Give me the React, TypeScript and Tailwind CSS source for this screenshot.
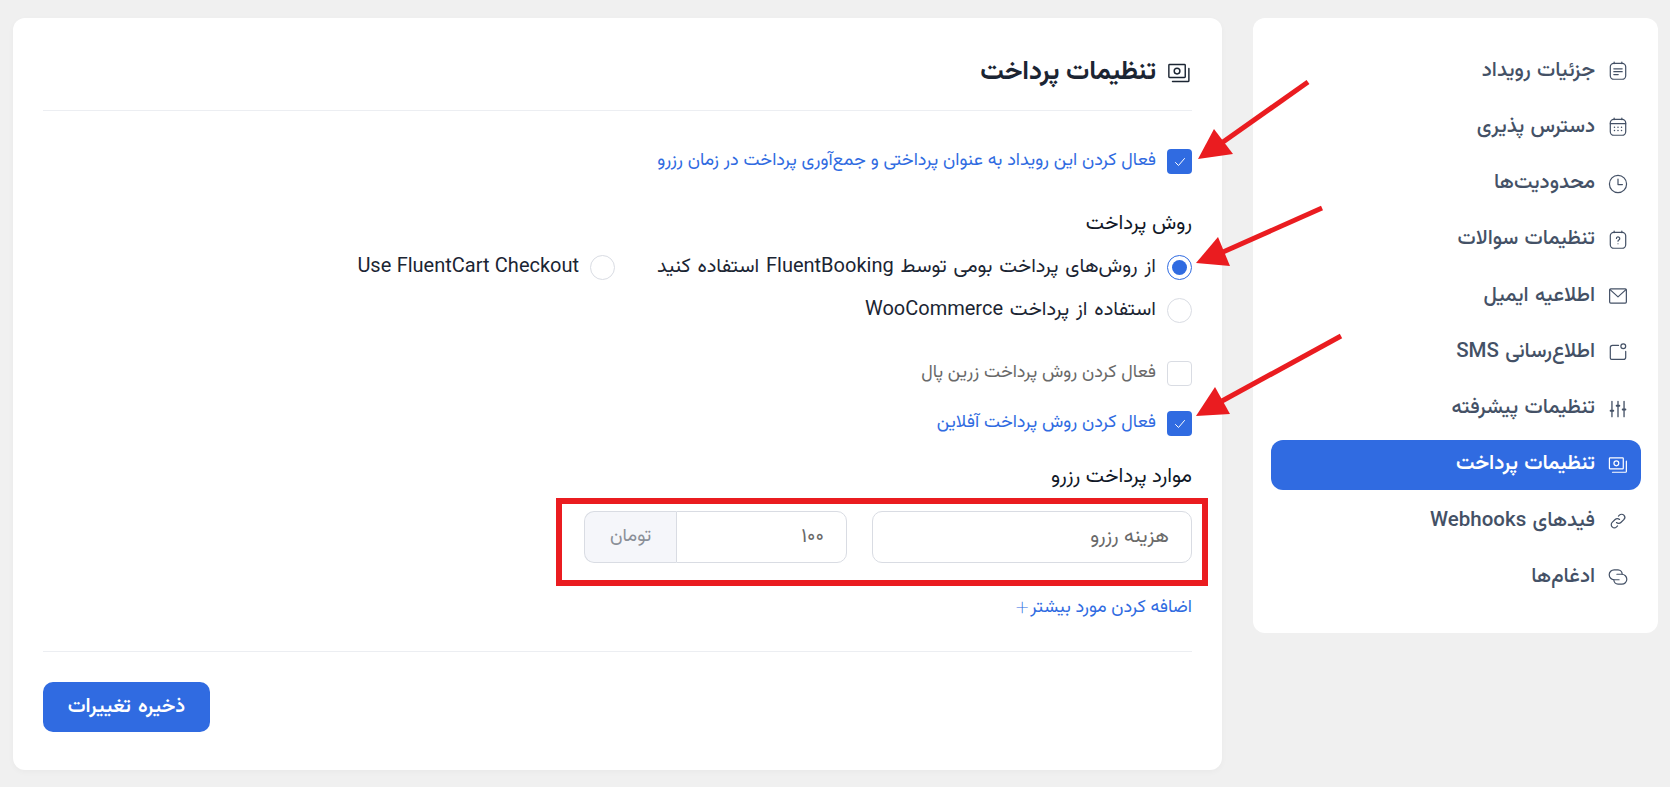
import { ReactNode } from "react";

const iconProps = {
  width: 22,
  height: 22,
  viewBox: "0 0 20 20",
  fill: "none",
  stroke: "currentColor",
  strokeWidth: 1.1,
  strokeLinecap: "round" as const,
  strokeLinejoin: "round" as const,
};

const DetailsIcon = () => (
  <svg {...iconProps}>
    <rect x="3" y="3" width="14" height="14.5" rx="3.2" />
    <path d="M6.5 1.8v1.4M13.5 1.8v1.4M6.2 8h7.6M6.2 10.6h7.6M6.2 13.2h4" />
  </svg>
);

const CalendarIcon = () => (
  <svg {...iconProps}>
    <rect x="3" y="3" width="14" height="14.5" rx="3.2" />
    <path d="M3 7h14M6.5 1.8v1.4M13.5 1.8v1.4" />
    <path d="M6.8 10.3h.01M10 10.3h.01M13.2 10.3h.01M6.8 13.2h.01M10 13.2h.01M13.2 13.2h.01" strokeWidth="1.4" />
  </svg>
);

const ClockIcon = () => (
  <svg {...iconProps}>
    <circle cx="10" cy="10" r="7.8" />
    <path d="M10 5.5V10.5H14" />
  </svg>
);

const QuestionIcon = () => (
  <svg {...iconProps}>
    <rect x="3" y="3" width="14" height="14.5" rx="3.2" />
    <path d="M6.5 1.8v1.4M13.5 1.8v1.4" />
    <path d="M8.6 8.6a1.5 1.5 0 1 1 2.2 1.4c-.5.3-.8.6-.8 1.1M10 13.4h.01" />
  </svg>
);

const MailIcon = () => (
  <svg {...iconProps}>
    <rect x="2.4" y="3.6" width="15.2" height="12.8" rx="1" />
    <path d="M2.8 4.2 10 10.8l7.2-6.6" />
  </svg>
);

const SmsIcon = () => (
  <svg {...iconProps}>
    <path d="M10.5 4H5a2 2 0 0 0-2 2v9.5a1.2 1.2 0 0 0 1.2 1.2H15a2 2 0 0 0 2-2V9.5" />
    <circle cx="14.8" cy="4.8" r="2.2" />
  </svg>
);

const SlidersIcon = () => (
  <svg {...iconProps} strokeWidth={1.2}>
    <path d="M4.5 3v14M10 3v14M15.5 3v14" />
    <path d="M3.3 11.5h2.4M8.8 7h2.4M14.3 10.5h2.4" strokeWidth="1.8" />
  </svg>
);

const PaymentIcon = ({ size = 22 }: { size?: number }) => (
  <svg {...iconProps} width={size} height={size}>
    <rect x="2.2" y="3.5" width="12.6" height="10" rx="0.6" />
    <circle cx="8.5" cy="8.5" r="2.2" />
    <path d="M17.6 6.5v9.4a.7.7 0 0 1-.7.7H5" />
  </svg>
);

const LinkIcon = () => (
  <svg {...iconProps}>
    <path d="M8.6 11.4a2.8 2.8 0 0 0 4 0l2.7-2.7a2.8 2.8 0 0 0-4-4l-.9.9" />
    <path d="M11.4 8.6a2.8 2.8 0 0 0-4 0l-2.7 2.7a2.8 2.8 0 0 0 4 4l.9-.9" />
  </svg>
);

const MergeIcon = () => (
  <svg {...iconProps}>
    <path d="M13.8 7.5A4 4 0 0 0 10 3.5H6.5a4.5 4.5 0 0 0 0 9H11" />
    <path d="M6.2 12.5a4 4 0 0 0 3.8 4h3.5a4.5 4.5 0 0 0 0-9H9" />
  </svg>
);

const CheckIcon = () => (
  <svg width="14" height="14" viewBox="0 0 14 14" fill="none" stroke="white" strokeWidth="1" strokeLinecap="round" strokeLinejoin="round">
    <path d="M2.5 7.5 5.5 10.5 11.5 3.5" />
  </svg>
);

const menu: { label: string; icon: ReactNode; active?: boolean }[] = [
  { label: "جزئیات رویداد", icon: <DetailsIcon /> },
  { label: "دسترس پذیری", icon: <CalendarIcon /> },
  { label: "محدودیت‌ها", icon: <ClockIcon /> },
  { label: "تنظیمات سوالات", icon: <QuestionIcon /> },
  { label: "اطلاعیه ایمیل", icon: <MailIcon /> },
  { label: "اطلاع‌رسانی SMS", icon: <SmsIcon /> },
  { label: "تنظیمات پیشرفته", icon: <SlidersIcon /> },
  { label: "تنظیمات پرداخت", icon: <PaymentIcon />, active: true },
  { label: "فیدهای Webhooks", icon: <LinkIcon /> },
  { label: "ادغام‌ها", icon: <MergeIcon /> },
];

const Checkbox = ({ label, checked }: { label: string; checked?: boolean }) => (
  <div className="flex items-center gap-[11px]">
    {checked ? (
      <span className="flex h-[25px] w-[25px] items-center justify-center rounded-[4px] bg-[#306be1]">
        <CheckIcon />
      </span>
    ) : (
      <span className="h-[25px] w-[25px] rounded-[4px] border border-[#d9dce3] bg-white" />
    )}
    <span className={checked ? "text-[18px] leading-[25px] text-[#306be1]" : "text-[18px] leading-[25px] text-[#696969]"}>{label}</span>
  </div>
);

const Radio = ({ label, checked, latin }: { label: string; checked?: boolean; latin?: boolean }) => (
  <div className="flex items-center gap-[11px]">
    {checked ? (
      <span className="flex h-[25px] w-[25px] items-center justify-center rounded-full border border-[#306be1]">
        <span className="h-[15px] w-[15px] rounded-full bg-[#306be1]" />
      </span>
    ) : (
      <span className="h-[25px] w-[25px] rounded-full border border-[#d9dce3] bg-white" />
    )}
    <span className={latin ? "text-[20px] leading-[25px] text-[#1b2533]" : "text-[20px] leading-[25px] text-[#1b2533] [word-spacing:1.5px]"}>{label}</span>
  </div>
);

export default function App() {
  return (
    <div
      dir="rtl"
      className="relative flex min-h-screen items-start gap-[31px] bg-[#f0f0f0] pb-[17px] pl-[13px] pr-[12px] pt-[18px] [font-family:Vazirmatn,Roboto,'DejaVu_Sans',sans-serif]"
    >
      {/* Sidebar */}
      <aside className="flex w-[405px] shrink-0 flex-col gap-[6.25px] rounded-[12px] bg-white pb-[31px] pl-[18px] pr-[17px] pt-[28px]">
        {menu.map((item) => (
          <div
            key={item.label}
            className={
              item.active
                ? "flex h-[50px] items-center gap-[12px] rounded-[12px] bg-[#306be1] pr-[12px] text-[20.5px] font-semibold text-white [word-spacing:1px]"
                : "flex h-[50px] items-center gap-[12px] rounded-[12px] pr-[12px] text-[20.5px] font-medium text-[#445166] [word-spacing:1px]"
            }
          >
            {item.icon}
            <span>{item.label}</span>
          </div>
        ))}
      </aside>

      {/* Main panel */}
      <main className="h-[752px] flex-1 rounded-[12px] bg-white px-[30px] shadow-[0_2px_6px_rgba(0,0,0,0.03)]">
        <header className="flex h-[93px] items-center gap-[10px] border-b border-[#eceef2] pt-[17px] text-[#1b2533]">
          <PaymentIcon size={26} />
          <h1 className="text-[26px] font-bold">تنظیمات پرداخت</h1>
        </header>

        <div className="pt-[38px]">
          <Checkbox checked label="فعال کردن این رویداد به عنوان پرداختی و جمع‌آوری پرداخت در زمان رزرو" />
        </div>

        <h2 className="mt-[38px] text-[20.5px] font-normal leading-[24px] text-[#111827]">روش پرداخت</h2>
        <div className="mt-[19px] flex flex-col gap-[18px]">
          <div className="flex gap-[42px]">
            <Radio checked label="از روش‌های پرداخت بومی توسط FluentBooking استفاده کنید" />
            <Radio latin label="Use FluentCart Checkout" />
          </div>
          <Radio label="استفاده از پرداخت WooCommerce" />
        </div>

        <div className="mt-[38px] flex flex-col gap-[25px]">
          <Checkbox label="فعال کردن روش پرداخت زرین پال" />
          <Checkbox checked label="فعال کردن روش پرداخت آفلاین" />
        </div>

        <h2 className="mt-[29px] text-[20.5px] font-normal leading-[24px] text-[#111827]">موارد پرداخت رزرو</h2>
        <div className="mt-[22px] flex gap-[25px] text-[20px] text-[#696969]">
          <div className="flex h-[52px] w-[320px] items-center rounded-[10px] border border-[#d9dce3] px-[22px]">هزینه رزرو</div>
          <div className="flex">
            <div className="flex h-[52px] w-[171px] items-center rounded-r-[10px] border border-[#d9dce3] px-[22px]">۱۰۰</div>
            <div className="flex h-[52px] w-[92px] items-center justify-center rounded-l-[10px] border border-r-0 border-[#d9dce3] bg-[#f5f6fa] text-[18.5px] text-[#8a8f98]">تومان</div>
          </div>
        </div>

        <div className="mt-[31px] flex h-[28px] items-center text-[18px] text-[#306be1]">
          <span>اضافه کردن مورد بیشتر</span>
          <span className="text-[32px] font-thin leading-none">+</span>
        </div>

        <div className="mt-[29px] border-t border-[#eceef2]" />

        <div className="mt-[30px] flex justify-end">
          <button className="h-[50px] w-[167px] rounded-[10px] bg-[#306be1] text-[20px] font-semibold text-white [word-spacing:2px]">ذخیره تغییرات</button>
        </div>
      </main>

      {/* Annotations drawn over the screenshot */}
      <div className="pointer-events-none absolute left-[556px] top-[498px] h-[88px] w-[652px] border-[6px] border-[#ea1c20]" />
      <svg className="pointer-events-none absolute left-0 top-0" width="1670" height="787" viewBox="0 0 1670 787" fill="#ea1c20">
        <path d="M1308 82 1223 142" stroke="#ea1c20" strokeWidth="5" />
        <path d="M1198 159 1214 129 1233 154Z" />
        <path d="M1322 208 1223 252" stroke="#ea1c20" strokeWidth="5" />
        <path d="M1196 263 1218 237 1230 266Z" />
        <path d="M1341 336 1222 401" stroke="#ea1c20" strokeWidth="5" />
        <path d="M1196 416 1215 387 1230 414Z" />
      </svg>
    </div>
  );
}
